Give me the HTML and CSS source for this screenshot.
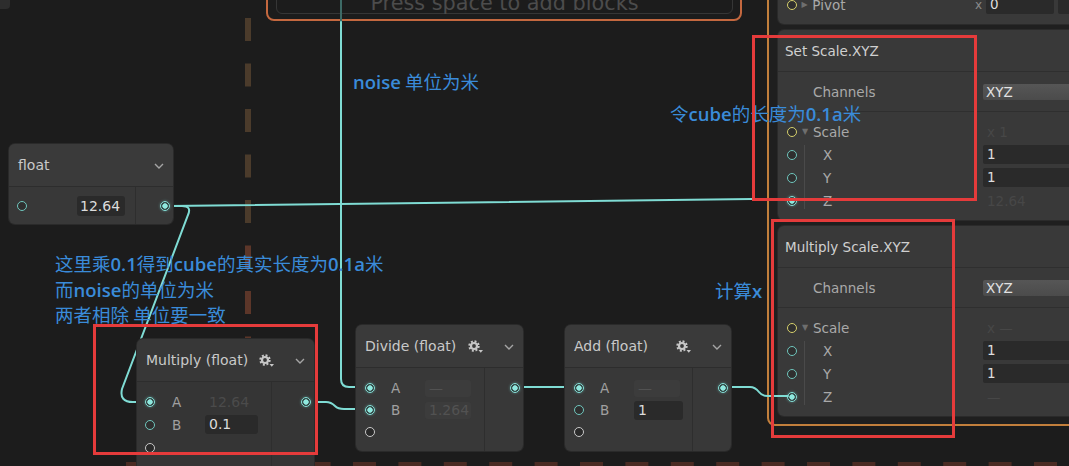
FILE: index.html
```html
<!DOCTYPE html>
<html>
<head>
<meta charset="utf-8">
<link rel="stylesheet" href="styles.css">
</head>
<body>
<div class="canvas">
  <div class="corner"></div>

  <svg class="layer" width="1069" height="466">
    <line x1="248" y1="18" x2="248" y2="240" stroke="#4b3b2b" stroke-width="6" stroke-dasharray="23 22.5"/>
    <line x1="248" y1="245.5" x2="248" y2="466" stroke="#5c3629" stroke-width="6" stroke-dasharray="23 22.5"/>
    <line x1="126" y1="464" x2="1069" y2="464" stroke="#4a2b23" stroke-width="4" stroke-dasharray="23 22.4"/>
  </svg>

  <div class="topbox">
    <div class="topbox-inner"><span class="hint">Press space to add blocks</span></div>
  </div>

  <div class="context">
    <div class="block block-pivot">
      <div class="prop">
        <i class="port yel"></i><span class="tri">&#9654;</span><span class="plabel">Pivot</span>
        <span class="pval"><span class="axis">x</span><span class="inp inp-short">0</span><span class="inp inp-rest"></span></span>
      </div>
    </div>

    <div class="block">
      <div class="bhead">Set Scale.XYZ</div>
      <div class="bset"><span class="plabel">Channels</span><span class="dd">XYZ</span></div>
      <div class="bprops">
        <div class="prop"><i class="port yel"></i><span class="tri">&#9660;</span><span class="plabel">Scale</span><span class="ghost">x 1</span></div>
        <div class="sub">
          <div class="prop"><i class="port"></i><span class="plabel slabel">X</span><span class="inp">1</span></div>
          <div class="prop"><i class="port"></i><span class="plabel slabel">Y</span><span class="inp">1</span></div>
          <div class="prop"><i class="port on"></i><span class="plabel slabel">Z</span><span class="ghost">12.64</span></div>
        </div>
      </div>
    </div>

    <div class="block">
      <div class="bhead">Multiply Scale.XYZ</div>
      <div class="bset"><span class="plabel">Channels</span><span class="dd">XYZ</span></div>
      <div class="bprops">
        <div class="prop"><i class="port yel"></i><span class="tri">&#9660;</span><span class="plabel">Scale</span><span class="ghost">x —</span></div>
        <div class="sub">
          <div class="prop"><i class="port"></i><span class="plabel slabel">X</span><span class="inp">1</span></div>
          <div class="prop"><i class="port"></i><span class="plabel slabel">Y</span><span class="inp">1</span></div>
          <div class="prop"><i class="port on"></i><span class="plabel slabel">Z</span><span class="ghost">—</span></div>
        </div>
      </div>
    </div>
  </div>

  <svg class="layer wires" width="1069" height="466">
    <g fill="none" stroke-width="2" stroke-linecap="round">
      <path d="M341 0 V22" stroke="#3d6a66"/>
      <path d="M341 22 V379 Q341 387 349 387 H366" stroke="#7fdcd4"/>
      <path d="M170 206 L752 199 H788" stroke="#7fdcd4"/>
      <path d="M170 206 H182 Q192 206 188 215 L122 389 Q119 402 133 402 H146" stroke="#7fdcd4"/>
      <path d="M310 402 H326 Q331 402 335 406 Q338 409 344 409 H366" stroke="#7fdcd4"/>
      <path d="M519 387 H575" stroke="#7fdcd4"/>
      <path d="M727 387 H750 Q755 387 759 392 Q762 396 768 396 H788" stroke="#7fdcd4"/>
    </g>
  </svg>

  <div class="node n-float">
    <div class="node-head">
      <span class="title">float</span>
      <svg class="chev" width="10" height="6" viewBox="0 0 10 6"><path d="M1 1 L5 5 L9 1" fill="none" stroke="#a5a5a5" stroke-width="1.4"/></svg>
    </div>
    <div class="node-body">
      <div class="ins ins-float">
        <div class="row row-spread"><i class="port"></i><span class="fld fld-float">12.64</span></div>
      </div>
      <div class="outs"><div class="row"><i class="port on"></i></div></div>
    </div>
  </div>

  <div class="node n-mul">
    <div class="node-head">
      <span class="title">Multiply (float)</span>
      <svg class="gear" width="16" height="14" viewBox="0 0 16 14"><circle cx="6" cy="6" r="4.6" fill="none" stroke="#c6c6c6" stroke-width="2.2" stroke-dasharray="1.9 1.71"/><circle cx="6" cy="6" r="3" fill="none" stroke="#c6c6c6" stroke-width="2.2"/><path d="M10.5 10 H15 L12.75 12.8 Z" fill="#c6c6c6"/></svg>
      <svg class="chev" width="10" height="6" viewBox="0 0 10 6"><path d="M1 1 L5 5 L9 1" fill="none" stroke="#a5a5a5" stroke-width="1.4"/></svg>
    </div>
    <div class="node-body">
      <div class="ins ins-mul">
        <div class="row row-23"><i class="port on"></i><span class="lbl">A</span><span class="fld ghostfld">12.64</span></div>
        <div class="row row-23"><i class="port"></i><span class="lbl">B</span><span class="fld fld-53">0.1</span></div>
        <div class="row row-23"><i class="port empty"></i></div>
      </div>
      <div class="outs"><div class="row row-23"><i class="port on"></i></div></div>
    </div>
  </div>

  <div class="node n-div">
    <div class="node-head">
      <span class="title">Divide (float)</span>
      <svg class="gear" width="16" height="14" viewBox="0 0 16 14"><circle cx="6" cy="6" r="4.6" fill="none" stroke="#c6c6c6" stroke-width="2.2" stroke-dasharray="1.9 1.71"/><circle cx="6" cy="6" r="3" fill="none" stroke="#c6c6c6" stroke-width="2.2"/><path d="M10.5 10 H15 L12.75 12.8 Z" fill="#c6c6c6"/></svg>
      <svg class="chev" width="10" height="6" viewBox="0 0 10 6"><path d="M1 1 L5 5 L9 1" fill="none" stroke="#a5a5a5" stroke-width="1.4"/></svg>
    </div>
    <div class="node-body">
      <div class="ins ins-div">
        <div class="row row-22"><i class="port on"></i><span class="lbl">A</span><span class="fld faint">—</span></div>
        <div class="row row-22"><i class="port on"></i><span class="lbl">B</span><span class="fld faint">1.264</span></div>
        <div class="row row-22"><i class="port empty"></i></div>
      </div>
      <div class="outs"><div class="row row-22"><i class="port on"></i></div></div>
    </div>
  </div>

  <div class="node n-add">
    <div class="node-head">
      <span class="title">Add (float)</span>
      <svg class="gear" width="16" height="14" viewBox="0 0 16 14"><circle cx="6" cy="6" r="4.6" fill="none" stroke="#c6c6c6" stroke-width="2.2" stroke-dasharray="1.9 1.71"/><circle cx="6" cy="6" r="3" fill="none" stroke="#c6c6c6" stroke-width="2.2"/><path d="M10.5 10 H15 L12.75 12.8 Z" fill="#c6c6c6"/></svg>
      <svg class="chev" width="10" height="6" viewBox="0 0 10 6"><path d="M1 1 L5 5 L9 1" fill="none" stroke="#a5a5a5" stroke-width="1.4"/></svg>
    </div>
    <div class="node-body">
      <div class="ins ins-add">
        <div class="row row-22"><i class="port on"></i><span class="lbl">A</span><span class="fld faint">—</span></div>
        <div class="row row-22"><i class="port"></i><span class="lbl">B</span><span class="fld fld-49">1</span></div>
        <div class="row row-22"><i class="port empty"></i></div>
      </div>
      <div class="outs"><div class="row row-22"><i class="port on"></i></div></div>
    </div>
  </div>

  <div class="note note-noise"><span class="lat">noise</span> 单位为米</div>
  <div class="note note-cube">令<span class="lat">cube</span>的长度为<span class="lat">0.1a</span>米</div>
  <div class="note note-left">
    <p>这里乘<span class="lat">0.1</span>得到<span class="lat">cube</span>的真实长度为<span class="lat">0.1a</span>米</p>
    <p>而<span class="lat">noise</span>的单位为米</p>
    <p>两者相除 单位要一致</p>
  </div>
  <div class="note note-x">计算<span class="lat">x</span></div>

  <div class="redbox r1"></div>
  <div class="redbox r2"></div>
  <div class="redbox r3"></div>
</div>
</body>
</html>
```

FILE: styles.css
```css
* { box-sizing: border-box; margin: 0; padding: 0; }

body {
  margin: 0;
  background: #1c1c1c;
  font-family: "DejaVu Sans", sans-serif;
}

.canvas {
  position: relative;
  width: 1069px;
  height: 466px;
  overflow: hidden;
  background: #1c1c1c;
}

.layer { position: absolute; left: 0; top: 0; }
.wires { z-index: 3; }

.corner {
  position: absolute;
  left: 0; top: 0;
  width: 10px; height: 9px;
  background: #2d2d2d;
  border-bottom-right-radius: 4px;
}

/* top "press space" system */
.topbox {
  position: absolute;
  left: 266px; top: -32px;
  width: 476px; height: 53px;
  border: 2px solid #c4683f;
  border-radius: 8px;
  padding: 0 7px 5px 8px;
  display: flex;
  z-index: 1;
}
.topbox-inner {
  flex: 1;
  border: 1px solid #363636;
  border-radius: 6px;
  display: flex;
  align-items: flex-end;
  justify-content: center;
}
.hint {
  font-size: 20.8px;
  line-height: 20px;
  color: #4c4c4c;
  white-space: nowrap;
}

/* right context */
.context {
  position: absolute;
  left: 767px; top: -30px;
  width: 340px; height: 456px;
  border: 2px solid #c27f3c;
  border-radius: 8px;
  background: #1f1f1f;
  padding: 3px 0 0 9px;
  display: flex;
  flex-direction: column;
  gap: 6px;
  z-index: 2;
}
.block {
  width: 320px;
  background: #393939;
  border-radius: 6px;
  box-shadow: 0 0 0 1px #2a2a2a;
}
.block-pivot { padding: 18px 0 8px; }
.bhead {
  height: 42px;
  padding-left: 7px;
  display: flex;
  align-items: center;
  font-size: 13.5px;
  color: #d0d0d0;
  border-bottom: 1px solid #2f2f2f;
}
.bset {
  height: 40px;
  display: flex;
  align-items: center;
  padding-left: 35px;
  border-bottom: 1px solid #2f2f2f;
}
.bset .plabel { width: 170px; }
.dd {
  width: 110px;
  height: 16px;
  background: linear-gradient(#565656, #4b4b4b);
  border-radius: 2px;
  color: #e2e2e2;
  font-size: 13.5px;
  line-height: 16px;
  padding-left: 3px;
}
.bprops { padding: 8px 0 8px; }
.sub { position: relative; }
.sub::before {
  content: "";
  position: absolute;
  left: 26px; top: 2px; bottom: 3px;
  width: 1px;
  background: #4a4a4a;
}
.prop {
  height: 23px;
  display: flex;
  align-items: center;
  padding-left: 9px;
}
.tri {
  width: 16px;
  text-align: center;
  font-size: 8px;
  color: #6e6e6e;
}
.plabel {
  font-size: 13.5px;
  color: #a9a9a9;
}
.prop > .plabel { width: 170px; }
.prop > .slabel { padding-left: 26px; width: 186px; }
.pval { display: flex; align-items: center; }
.axis { font-size: 12px; color: #8a8a8a; width: 11px; }
.inp {
  width: 110px;
  height: 19px;
  background: #2a2a2a;
  border-radius: 2px;
  color: #dedede;
  font-size: 13.5px;
  line-height: 19px;
  padding-left: 4px;
}
.inp-short { width: 68px; margin-right: 4px; }
.inp-rest { width: 40px; }
.ghost {
  font-size: 13.5px;
  color: #474747;
  padding-left: 4px;
}

/* ports */
.port {
  display: block;
  flex: none;
  width: 10px; height: 10px;
  border-radius: 50%;
  border: 1.5px solid #6fc6bd;
  background: #2f2f2f;
}
.port.on {
  border-color: #86e2d9;
  background: radial-gradient(circle, #8fe8de 0 2.4px, #2f3f3e 3px);
  box-shadow: 0 0 3px rgba(127, 220, 212, 0.45);
}
.port.empty { border-color: #c9c9c9; background: #2a2a2a; }
.port.yel { border-color: #d6d06c; background: #2f2f2f; }

/* nodes */
.node {
  position: absolute;
  background: #383838;
  border-radius: 6px;
  box-shadow: 0 0 0 1px #2a2a2a;
  display: flex;
  flex-direction: column;
  overflow: hidden;
  z-index: 4;
}
.n-float { left: 9px; top: 144px; width: 164px; height: 80px; }
.n-mul { left: 137px; top: 339px; width: 177px; height: 140px; background: #353535; }
.n-div { left: 356px; top: 325px; width: 167px; height: 126px; }
.n-add { left: 565px; top: 325px; width: 166px; height: 126px; }

.node-head {
  height: 43px;
  flex: none;
  display: flex;
  align-items: center;
  padding: 0 9px;
  background: #3a3a3a;
  border-bottom: 1px solid #2d2d2d;
}
.n-mul .node-head { background: #373737; }
.title {
  flex: 1;
  font-size: 14px;
  color: #c9c9c9;
  white-space: nowrap;
}
.gear { margin-right: 20px; margin-top: 2px; }
.chev { flex: none; margin-top: 2px; }

.node-body { flex: 1; display: flex; }
.ins { flex: none; padding-top: 9px; }
.n-mul .ins { padding-top: 8px; }
.ins-float { width: 126px; padding: 0 10px 0 8px; display: flex; align-items: center; }
.ins-mul { width: 134px; }
.ins-div { width: 128px; }
.ins-add { width: 127px; }
.outs {
  flex: 1;
  border-left: 1px solid #2e2e2e;
  padding: 9px 3px 0 0;
}
.n-mul .outs { padding-top: 8px; }
.n-float .outs { padding-top: 0; display: flex; align-items: center; justify-content: flex-end; }
.outs .row { justify-content: flex-end; padding-left: 0; }

.row {
  display: flex;
  align-items: center;
  padding-left: 8px;
}
.ins-div .row, .ins-add .row { padding-left: 9px; }
.row-spread { flex: 1; justify-content: space-between; padding-left: 0; }
.row-22 { height: 22px; }
.row-23 { height: 23px; }

.lbl {
  width: 50px;
  padding-left: 17px;
  font-size: 13.5px;
  color: #a0a0a0;
}
.ins-div .lbl, .ins-add .lbl { padding-left: 16px; width: 50px; }

.fld {
  height: 20px;
  border-radius: 3px;
  background: #2a2a2a;
  color: #dcdcdc;
  font-size: 14px;
  line-height: 20px;
  padding-left: 4px;
}
.fld-float { width: 48px; padding-left: 3px; }
.fld-53 { width: 53px; height: 19px; line-height: 19px; }
.fld-49 { width: 49px; height: 19px; line-height: 19px; }
.ghostfld { background: transparent; color: #4b4b4b; }
.faint { width: 46px; height: 17px; line-height: 17px; background: #3c3c3c; color: #525252; }

/* annotations */
.note {
  position: absolute;
  z-index: 6;
  font-family: "Noto Sans CJK SC", sans-serif;
  font-size: 18.5px;
  line-height: 25.5px;
  color: #3a8bd9;
  white-space: nowrap;
}
.lat { font-family: "Open Sans", "Noto Sans CJK SC", sans-serif; font-weight: 600; }
.note-noise { left: 353px; top: 69px; }
.note-cube { left: 670px; top: 101px; }
.note-left { left: 55px; top: 251px; }
.note-x { left: 715px; top: 278px; }

/* red annotation boxes */
.redbox {
  position: absolute;
  z-index: 7;
  border: 3px solid #e53b3b;
}
.r1 { left: 752px; top: 35px; width: 225px; height: 166px; }
.r2 { left: 771px; top: 219px; width: 184px; height: 219px; }
.r3 { left: 93px; top: 324px; width: 225px; height: 131px; }
```
